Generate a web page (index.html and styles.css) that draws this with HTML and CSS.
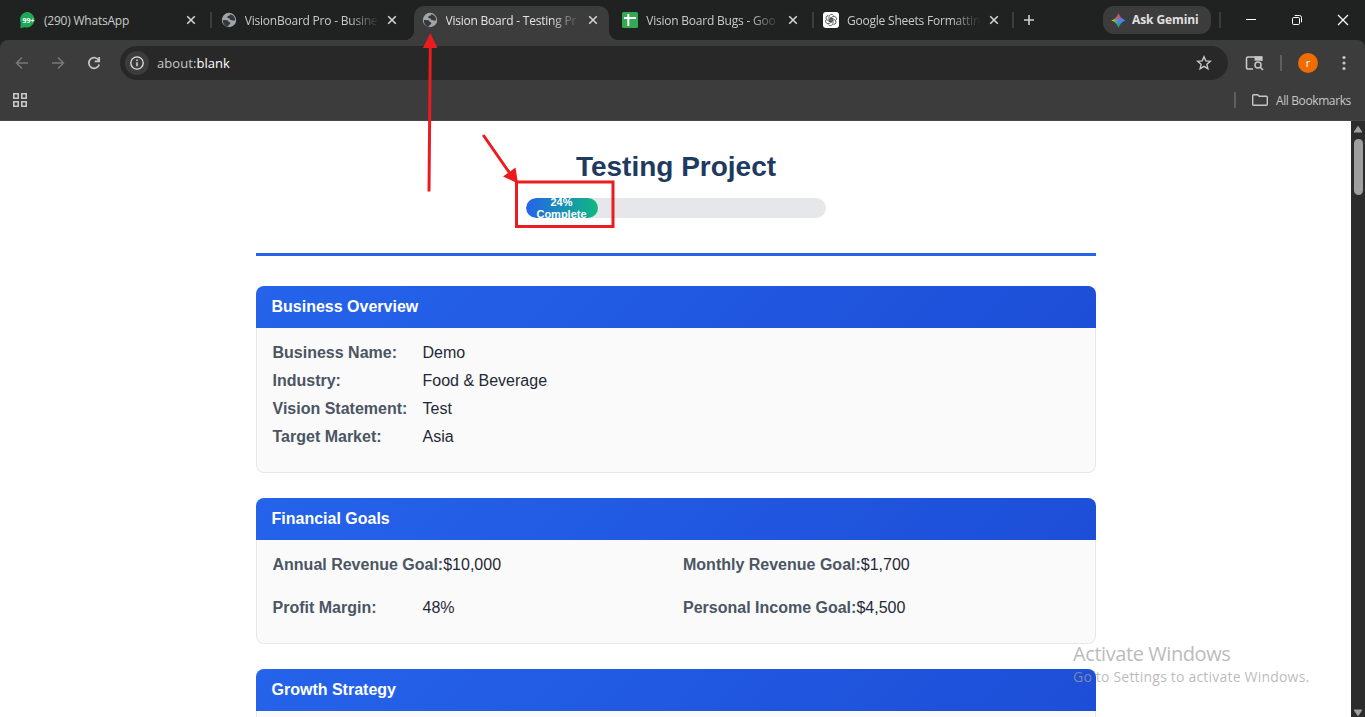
FILE: index.html
```html
<!DOCTYPE html>
<html lang="en">
<head>
<meta charset="utf-8">
<title>Vision Board - Testing Project</title>
<link rel="stylesheet" href="styles.css">
</head>
<body>
<svg width="0" height="0" class="defs">
  <defs>
    <symbol id="globe" viewBox="0 0 16 16">
      <circle cx="8" cy="8" r="7.2" fill="#a0a5ac"/>
      <path d="M1.800 8.200C3.500 7.800 4.500 8 6 8.200c1.500.2 1.800 1 1.600 1.900 1.200 0 1.800.5 1.700 1.500-.1.900-.9 1.300-1.900 1.400v1.600C4.200 14.600 1.800 12 1.800 8.200zM9.800 2.200C9 2.300 8.700 3 8.600 3.700 7 3.600 6.200 4.200 6.300 5.300c.1 1 1 1.100 2.200 1 .2 1.400 1 1.900 2.200 1.900 1 0 1.600.8 3.400.2.200-3-1.600-5.400-4.300-6.200z" fill="#35383b"/>
    </symbol>
    <symbol id="close" viewBox="0 0 10 10">
      <path d="M1.200 1.200l7.600 7.600M8.800 1.200l-7.600 7.600" stroke="#d2d3d3" stroke-width="1.600" fill="none"/>
    </symbol>
  </defs>
</svg>

<div class="browser">
  <header class="tabstrip">
    <div class="tab">
      <svg class="favicon" viewBox="0 0 16 16"><path d="M8.300 0A7.700 7.700 0 1 1 5 15.200L.3 16l.5-5A7.700 7.700 0 0 1 8.300 0z" fill="#1fa855"/><text x="8.400" y="10.900" text-anchor="middle" class="badge-text">99+</text></svg>
      <span class="tab-title">(290) WhatsApp</span>
      <svg class="x"><use href="#close"/></svg>
    </div>
    <div class="tab sep-before">
      <svg class="favicon"><use href="#globe"/></svg>
      <span class="tab-title fade">VisionBoard Pro - Busine</span>
      <svg class="x"><use href="#close"/></svg>
    </div>
    <div class="tab active">
      <svg class="favicon"><use href="#globe"/></svg>
      <span class="tab-title fade">Vision Board - Testing Pr</span>
      <svg class="x"><use href="#close"/></svg>
    </div>
    <div class="tab">
      <svg class="favicon" viewBox="0 0 16 16"><rect width="16" height="16" rx="1.500" fill="#34a853"/><path d="M2 6h12M6.300 2v12" stroke="#fff" stroke-width="2"/></svg>
      <span class="tab-title fade">Vision Board Bugs - Goo</span>
      <svg class="x"><use href="#close"/></svg>
    </div>
    <div class="tab sep-before">
      <svg class="favicon" viewBox="0 0 16 16"><rect width="16" height="16" rx="3" fill="#fff"/>
        <g fill="none" stroke="#444" stroke-width=".8">
          <path id="petal" d="M6 8V4.800a2.500 2.500 0 0 1 4.600-1.300M6 8l3 1.700"/>
          <use href="#petal" transform="rotate(60 8 8)"/><use href="#petal" transform="rotate(120 8 8)"/><use href="#petal" transform="rotate(180 8 8)"/><use href="#petal" transform="rotate(240 8 8)"/><use href="#petal" transform="rotate(300 8 8)"/>
        </g></svg>
      <span class="tab-title fade">Google Sheets Formattin</span>
      <svg class="x"><use href="#close"/></svg>
    </div>
    <div class="newtab sep-before"><svg width="12" height="12" viewBox="0 0 12 12"><path d="M6 1v10M1 6h10" stroke="#d0d1d1" stroke-width="1.600"/></svg></div>
    <div class="gemini">
      <svg width="15" height="15" viewBox="0 0 15 15">
        <defs><linearGradient id="gh"><stop offset="0" stop-color="#fbbc04"/><stop offset=".3" stop-color="#72b04c"/><stop offset=".5" stop-color="#3f8bf4"/><stop offset="1" stop-color="#3186ff"/></linearGradient>
        <linearGradient id="gv" x2="0" y2="1"><stop offset="0" stop-color="#f43f3a"/><stop offset=".35" stop-color="#e9456a" stop-opacity=".7"/><stop offset=".5" stop-color="#4285f4" stop-opacity="0"/><stop offset=".7" stop-color="#19a75b" stop-opacity=".4"/><stop offset="1" stop-color="#18ad51"/></linearGradient></defs>
        <path d="M7.500.3C8.700 4 11 6.300 14.700 7.500 11 8.700 8.700 11 7.500 14.700 6.300 11 4 8.700.3 7.500 4 6.300 6.300 4 7.500.3z" fill="url(#gh)"/>
        <path d="M7.500.3C8.700 4 11 6.300 14.700 7.500 11 8.700 8.700 11 7.500 14.700 6.300 11 4 8.700.3 7.500 4 6.300 6.300 4 7.500.3z" fill="url(#gv)"/>
      </svg>
      <span class="gemini-text">Ask Gemini</span>
    </div>
    <div class="winctl">
      <svg width="12" height="12" viewBox="0 0 12 12"><path d="M1 5.500h10" stroke="#fff"/></svg>
      <svg width="12" height="12" viewBox="0 0 12 12" fill="none" stroke="#fff"><rect x="1.500" y="3.500" width="7" height="7" rx="1.200"/><path d="M3.700 1.500h4.800a2 2 0 0 1 2 2v4.800"/></svg>
      <svg width="12" height="12" viewBox="0 0 12 12"><path d="M1 1l10 10M11 1L1 11" stroke="#fff" stroke-width="1.200"/></svg>
    </div>
  </header>

  <div class="toolbar">
    <div class="nav">
      <svg width="14" height="14" viewBox="0 0 14 14" fill="none" stroke="#777" stroke-width="1.500"><path d="M13 7H2M7 1.500L1.500 7 7 12.500"/></svg>
      <svg width="14" height="14" viewBox="0 0 14 14" fill="none" stroke="#777" stroke-width="1.500"><path d="M1 7h11M7 1.500L12.500 7 7 12.500"/></svg>
      <svg width="14" height="14" viewBox="0 0 14 14" fill="none" stroke="#c7c7c7" stroke-width="1.700"><path d="M11.800 4.500A5.300 5.300 0 1 0 12.200 8.500M12.200 1v4.300H7.800"/></svg>
    </div>
    <div class="omnibox">
      <span class="info"><svg width="14" height="14" viewBox="0 0 14 14"><circle cx="7" cy="7" r="6.200" fill="none" stroke="#e3e3e3" stroke-width="1.300"/><path d="M7 6.200v4M7 3.500v1.500" stroke="#e3e3e3" stroke-width="1.400"/></svg></span>
      <span class="url">about:<b>blank</b></span>
      <svg class="star" width="16" height="16" viewBox="0 0 16 16"><path d="M8 1.800l1.800 4.100 4.500.4-3.400 3 1 4.400L8 11.400l-3.900 2.300 1-4.400-3.400-3 4.500-.4z" fill="none" stroke="#c7c7c7" stroke-width="1.400"/></svg>
    </div>
    <svg class="lens" width="19" height="16" viewBox="0 0 19 16"><path d="M8 14H3a1.500 1.500 0 0 1-1.500-1.500v-9A1.500 1.500 0 0 1 3 2h13.500v4" fill="none" stroke="#c7c7c7" stroke-width="1.600"/><path d="M9.500 1.500H17.500v4.200H9.500z" fill="#c7c7c7"/><circle cx="13" cy="10" r="3" fill="#3c3c3c" stroke="#c7c7c7" stroke-width="1.500"/><path d="M15.200 12.200l2.800 2.800" stroke="#c7c7c7" stroke-width="1.600"/></svg>
    <i class="bar"></i>
    <span class="avatar">r</span>
    <svg class="kebab" width="4" height="16" viewBox="0 0 4 16" fill="#c7c7c7"><circle cx="2" cy="2.500" r="1.600"/><circle cx="2" cy="8" r="1.600"/><circle cx="2" cy="13.500" r="1.600"/></svg>
  </div>

  <div class="bookmarks">
    <svg width="16" height="16" viewBox="0 0 16 16" fill="none" stroke="#c7c7c7" stroke-width="1.600"><path d="M1.800 1.800h4.400v4.400H1.800zM9.800 1.800h4.400v4.400H9.800zM1.800 9.800h4.400v4.400H1.800zM9.800 9.800h4.400v4.400H9.800z"/></svg>
    <div class="all">
      <i class="bar"></i>
      <svg width="16" height="12" viewBox="0 0 16 12"><path d="M.7 10.300V1.700q0-1 1-1h4l1.600 1.600h7q1 0 1 1v7q0 1-1 1H1.700q-1 0-1-1z" fill="none" stroke="#c7c7c7" stroke-width="1.400"/></svg>
      <span class="all-text">All Bookmarks</span>
    </div>
  </div>

  <div class="viewport">
    <main class="page">
      <div class="head">
        <h1>Testing Project</h1>
        <div class="progress"><div class="fill" style="width:24%">24% Complete</div></div>
      </div>
      <section class="card">
        <h2>Business Overview</h2>
        <div class="card-body">
          <div class="row"><span class="label">Business Name:</span><span>Demo</span></div>
          <div class="row"><span class="label">Industry:</span><span>Food &amp; Beverage</span></div>
          <div class="row"><span class="label">Vision Statement:</span><span>Test</span></div>
          <div class="row"><span class="label">Target Market:</span><span>Asia</span></div>
        </div>
      </section>
      <section class="card">
        <h2>Financial Goals</h2>
        <div class="card-body grid">
          <div class="row"><span class="label">Annual Revenue Goal:</span><span>$10,000</span></div>
          <div class="row"><span class="label">Monthly Revenue Goal:</span><span>$1,700</span></div>
          <div class="row"><span class="label">Profit Margin:</span><span>48%</span></div>
          <div class="row"><span class="label">Personal Income Goal:</span><span>$4,500</span></div>
        </div>
      </section>
      <section class="card">
        <h2>Growth Strategy</h2>
        <div class="card-body"></div>
      </section>
    </main>
    <div class="scrollbar">
      <svg width="10" height="8" viewBox="0 0 10 8"><path d="M5 1.300L8.800 7H1.200z" fill="#9f9f9f" stroke="#9f9f9f" stroke-linejoin="round"/></svg>
      <i class="thumb"></i>
      <svg class="down" width="10" height="8" viewBox="0 0 10 8"><path d="M5 6.700L8.800 1H1.200z" fill="#9f9f9f" stroke="#9f9f9f" stroke-linejoin="round"/></svg>
    </div>
  </div>
</div>

<div class="watermark"><div class="w1">Activate Windows</div><div class="w2">Go to Settings to activate Windows.</div></div>

<svg class="marks" width="1365" height="717" viewBox="0 0 1365 717">
  <g fill="none" stroke="#ea1c1f" stroke-width="3"><path d="M429 191.500L430.300 45M483.200 135L511 175"/><rect x="516.500" y="182" width="96.500" height="44.500"/></g>
  <path d="M430.300 33l7.200 15h-14.500zM518 183.500l-15-7 12.500-9z" fill="#ea1c1f"/>
</svg>
</body>
</html>
```
FILE: styles.css
```css
* { box-sizing: border-box; }
body { margin: 0; width: 1365px; height: 717px; overflow: hidden; background: #202221; font-family: "Liberation Sans", Arial, sans-serif; }
svg { display: block; flex: none; }
.defs { position: absolute; }
.browser { display: flex; flex-direction: column; height: 717px; }

.tabstrip { display: flex; height: 40px; padding-left: 10px; background: #202221; font: 12px "Open Sans", "Noto Sans", sans-serif; color: #c9cacb; }
.tab { position: relative; display: flex; align-items: center; width: 200px; padding: 0 10px; margin-right: .75px; }
.favicon { width: 16px; height: 16px; margin-right: 8px; }
.tab-title { flex: 1; white-space: nowrap; line-height: 20px; padding-top: 1px; margin-right: 7px; letter-spacing: -.22px; }
.fade { -webkit-mask-image: linear-gradient(90deg, #000 104px, transparent 134px); mask-image: linear-gradient(90deg, #000 104px, transparent 134px); }
.x { width: 10px; height: 10px; margin-right: 4px; }
.badge-text { font: bold 7px "Open Sans", sans-serif; fill: #fff; }
.sep-before::before { content: ""; position: absolute; left: -1px; top: 12px; width: 2px; height: 16px; background: #3c3c3c; }
.active { color: #e3e3e3; z-index: 1; }
.active::before { content: ""; position: absolute; z-index: -1; left: 2.500px; right: 2.500px; top: 6px; bottom: 0; border-radius: 10px 10px 0 0; background: #3c3c3c; }
.active::after { content: ""; position: absolute; z-index: -1; left: -7.500px; right: -7.500px; bottom: 0; height: 10px; background: radial-gradient(circle at 0 0, transparent 10px, #3c3c3c 10.5px) left / 10px 10px no-repeat, radial-gradient(circle at 100% 0, transparent 10px, #3c3c3c 10.5px) right / 10px 10px no-repeat; }
.newtab { position: relative; width: 89.250px; padding: 14px 0 0 9px; }
.newtab::before { left: -2px; }
.gemini { display: flex; align-items: center; gap: 6px; width: 108px; height: 28px; margin: 6px 0 0; padding-left: 8px; border-radius: 11px; background: #3c3c3c; font-weight: 700; color: #e0e0e0; white-space: nowrap; }
.gemini-text { padding-bottom: 1px; letter-spacing: -.1px; }
.winctl { position: relative; display: flex; gap: 34px; padding: 14px 0 0 34px; }
.winctl::before { content: ""; position: absolute; left: 8px; top: 12px; width: 2px; height: 16px; background: #3c3c3c; }

.toolbar { display: flex; align-items: center; height: 40px; padding-top: 6px; background: #3c3c3c; border-radius: 8px 8px 0 0; }
.nav { display: flex; gap: 22px; width: 120px; padding-left: 15px; }
.omnibox { display: flex; align-items: center; width: 1108px; height: 34px; padding: 0 16px 0 5px; border-radius: 17px; background: #282828; }
.info { display: grid; place-items: center; width: 24px; height: 24px; border-radius: 50%; background: #3c3c3c; }
.url { margin-left: 8px; font: 13px "Open Sans", sans-serif; letter-spacing: .06px; color: #c7c7c7; }
.url b { font-weight: 400; color: #fff; }
.star { margin-left: auto; }
.lens { margin-left: 17px; }
.bar { width: 2px; height: 16px; background: #5e5e5e; }
.toolbar .bar { margin-left: 16px; }
.avatar { display: grid; place-items: center; width: 20px; height: 20px; margin-left: 16px; border-radius: 50%; background: #ef6c00; color: #fff; font: 11px/18px "Open Sans", sans-serif; }
.kebab { margin-left: 24px; }

.bookmarks { display: flex; align-items: center; justify-content: space-between; height: 41px; padding: 0 14px 0 12px; background: #3c3c3c; border-bottom: 1px solid #474747; }
.all { display: flex; align-items: center; color: #c7c7c7; font: 12px "Open Sans", sans-serif; white-space: nowrap; }
.all svg { margin: 0 8px 0 16px; }
.all-text { width: 75px; letter-spacing: -.39px; }

.viewport { display: flex; height: 596px; background: #fff; overflow: hidden; }
.page { width: 840px; margin: 0 auto; }
.head { height: 135px; padding-top: 30px; border-bottom: 3px solid #2563eb; margin-bottom: 30px; }
h1 { margin: 0; font-size: 28px; line-height: 32px; text-align: center; text-indent: 1px; color: #1e3a5f; }
.progress { width: 300px; height: 20px; margin: 15px auto 0; border-radius: 10px; background: #e5e7eb; overflow: hidden; }
.fill { display: flex; align-items: center; height: 20px; border-radius: 10px; overflow: hidden; background: linear-gradient(90deg, #2563eb, #10b981); color: #fff; font-size: 11px; line-height: 12px; font-weight: 700; text-align: center; justify-content: center; }
.card { margin-bottom: 25px; }
h2 { margin: 0; height: 42px; padding-left: 16px; font-size: 16px; line-height: 41px; color: #fff; background: linear-gradient(135deg, #2563eb, #1d4ed8); border-radius: 8px 8px 0 0; }
.card-body { padding: 15px 16px 17px; border: 1px solid #e5e7eb; border-top: 0; border-radius: 0 0 8px 8px; background: #fafafa; min-height: 50px; }
.row { display: flex; height: 20px; margin-bottom: 8px; font-size: 16px; line-height: 20px; color: #1f2937; white-space: nowrap; }
.label { min-width: 150px; font-weight: 700; color: #4b5563; }
.grid { display: grid; grid-template-columns: 1fr 1fr; gap: 15px; }
.scrollbar { display: flex; flex-direction: column; align-items: center; width: 14px; padding: 4px 0 0; background: #2c2c2c; }
.thumb { width: 9px; height: 56px; margin: 6px 0 0 1px; border-radius: 5px; background: #9f9f9f; }
.down { margin-top: auto; }

.watermark { position: absolute; left: 1073px; top: 641px; color: rgba(160,160,160,.72); font-family: "Open Sans", sans-serif; white-space: nowrap; }
.w1 { font-size: 20px; line-height: 26px; letter-spacing: -.42px; }
.w2 { font-size: 14px; line-height: 19px; letter-spacing: .2px; }
.marks { position: absolute; left: 0; top: 0; z-index: 5; }
```
